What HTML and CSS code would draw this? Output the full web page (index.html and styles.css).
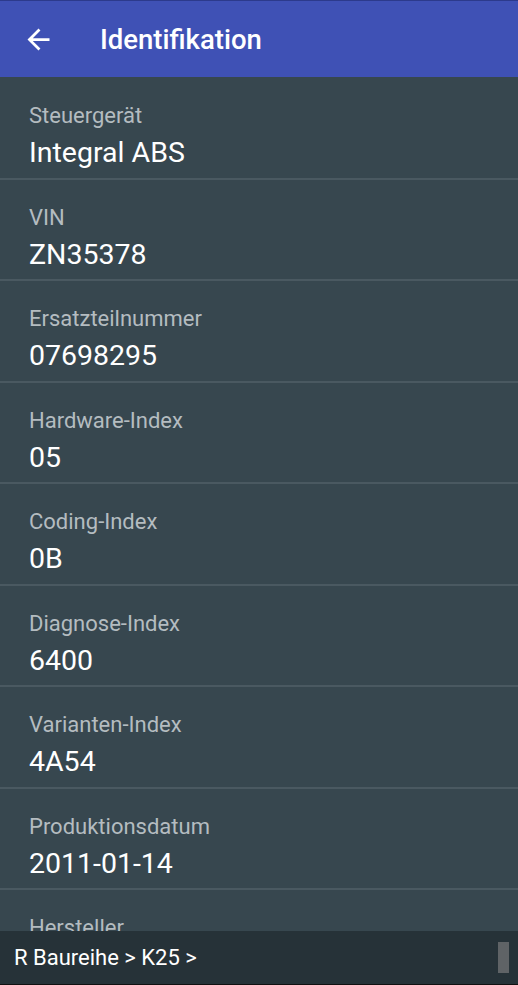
FILE: index.html
```html
<!DOCTYPE html>
<html lang="de">
<head>
  <meta charset="UTF-8" />
  <meta name="viewport" content="width=device-width, initial-scale=1.0"/>
  <title>Identifikation</title>
  <link rel="stylesheet" href="styles.css">
</head>
<body>
  <div class="app">
    <div class="toolbar">
      <svg class="back" viewBox="0 0 24 24" width="33" height="33">
        <path d="M20 11H7.83l5.59-5.59L12 4l-8 8 8 8 1.41-1.41L7.83 13H20v-2z" fill="#fff"/>
      </svg>
      <h1>Identifikation</h1>
    </div>

    <div class="list">
      <div class="item"><div class="label">Steuergerät</div><div class="value">Integral ABS</div></div>
      <div class="item"><div class="label">VIN</div><div class="value">ZN35378</div></div>
      <div class="item"><div class="label">Ersatzteilnummer</div><div class="value">07698295</div></div>
      <div class="item"><div class="label">Hardware-Index</div><div class="value">05</div></div>
      <div class="item"><div class="label">Coding-Index</div><div class="value">0B</div></div>
      <div class="item"><div class="label">Diagnose-Index</div><div class="value">6400</div></div>
      <div class="item"><div class="label">Varianten-Index</div><div class="value">4A54</div></div>
      <div class="item"><div class="label">Produktionsdatum</div><div class="value">2011-01-14</div></div>
      <div class="item"><div class="label">Hersteller</div><div class="value">Bosch</div></div>
    </div>

    <div class="crumbs">
      <span>R Baureihe &gt; K25 &gt;</span>
      <div class="scroll"></div>
    </div>
  </div>
</body>
</html>
```

FILE: styles.css
```css
html, body { margin: 0; padding: 0; height: 100%; }
body { font-family: Roboto, "Noto Sans", sans-serif; background: #37474f; }
.app { display: flex; flex-direction: column; height: 985px; overflow: hidden; }
.toolbar { flex: none; height: 76px; background: #3f51b5; border-top: 1px solid #2c3a8c; display: flex; align-items: center; padding-left: 22px; }
.back { display: block; }
.toolbar h1 { margin: 0 0 0 45px; font-size: 27.5px; font-weight: 500; color: #fff; }
.list { flex: 1; min-height: 0; overflow: hidden; padding-top: 1px; }
.item { height: 99.5px; border-bottom: 2px solid #4a5961; padding: 0 29px; }
.label { padding-top: 25px; font-size: 22px; line-height: 26px; color: #b4bcc0; }
.value { margin-top: 7px; font-size: 28.5px; line-height: 34px; color: #fff; }
.crumbs { flex: none; height: 53px; background: #263238; border-bottom: 1px solid #111; display: flex; align-items: center; justify-content: space-between; padding: 0 9px 0 14px; }
.crumbs span { font-size: 22px; color: #fff; }
.scroll { width: 11px; height: 31px; background: #5f6366; }
```
